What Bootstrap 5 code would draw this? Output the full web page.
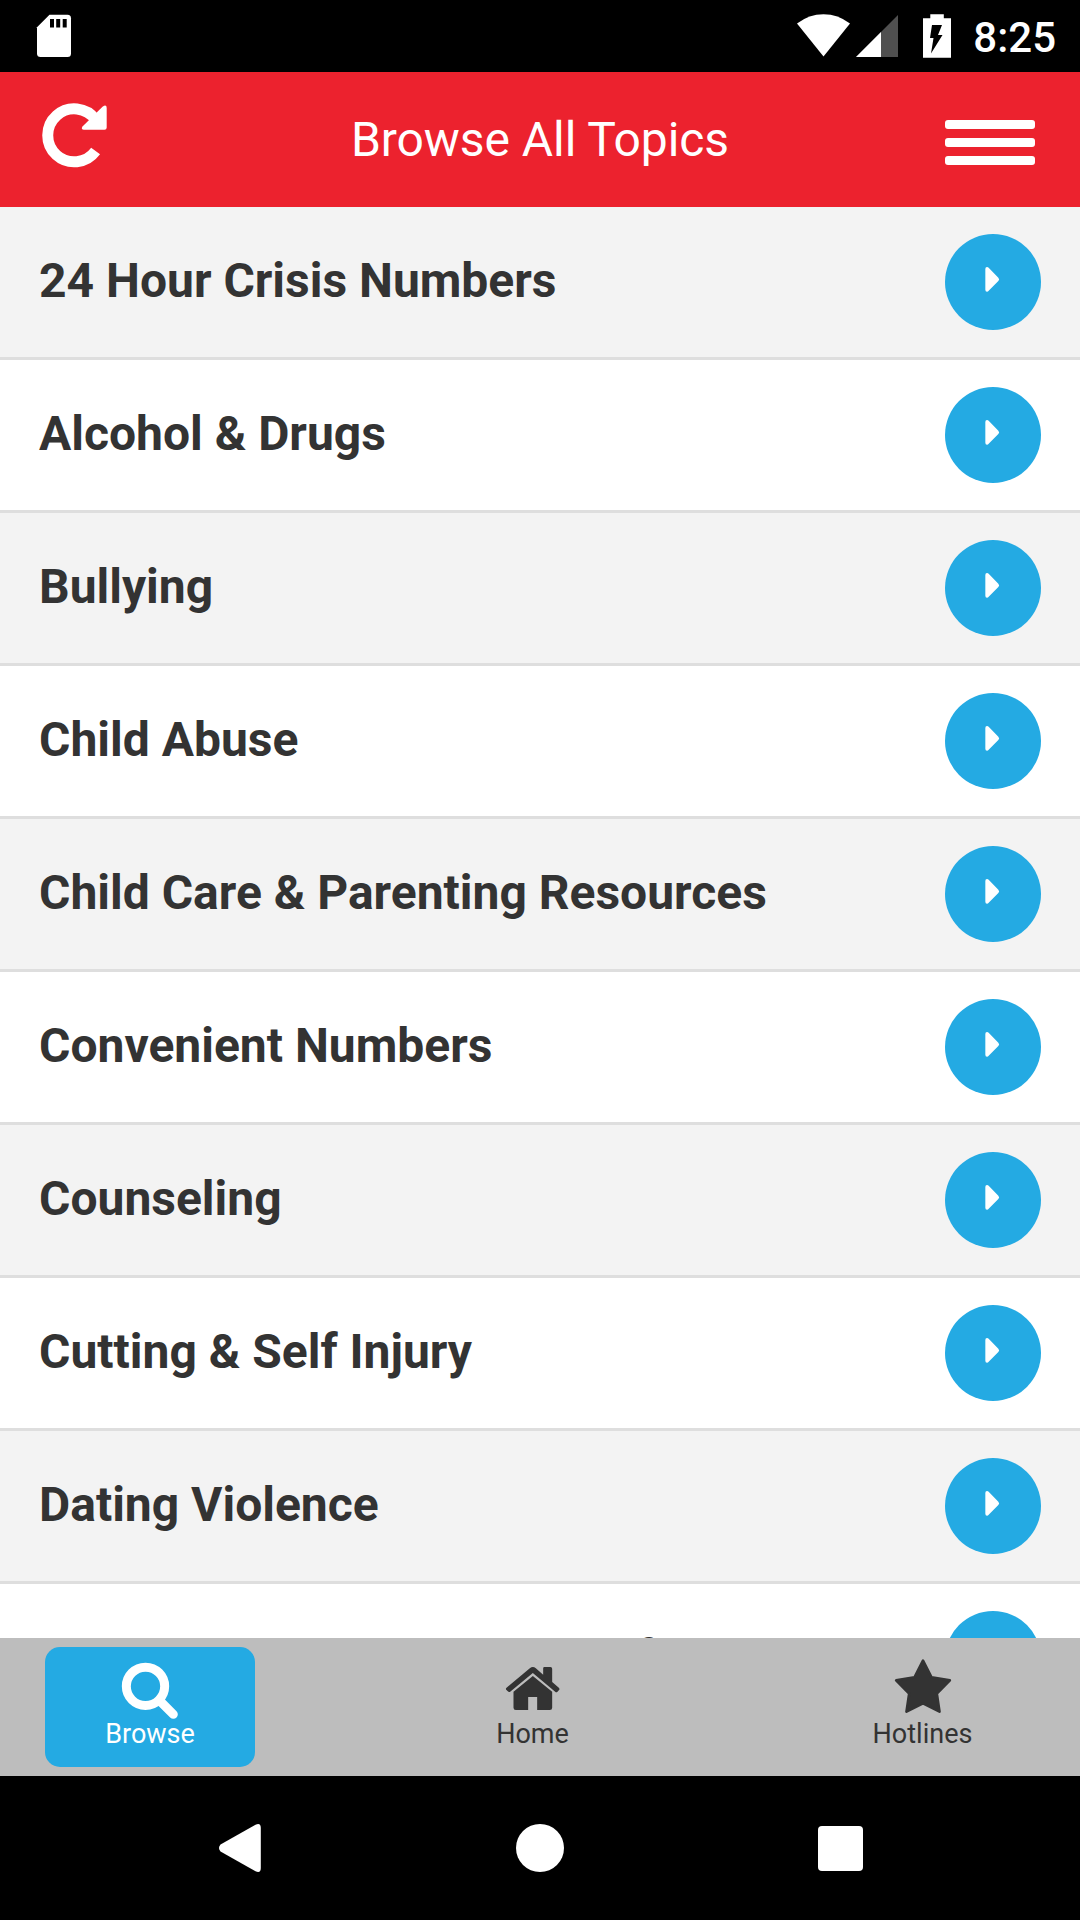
<!DOCTYPE html>
<html lang="en">
<head>
<meta charset="utf-8">
<meta name="viewport" content="width=device-width, initial-scale=1">
<title>Browse All Topics</title>
<link href="https://cdn.jsdelivr.net/npm/bootstrap@5.3.0/dist/css/bootstrap.min.css" rel="stylesheet">
<style>
  body { font-family: Roboto, "Liberation Sans", sans-serif; color: #333; }
  svg { display: block; flex: none; overflow: visible; }
  .screen { width: 1080px; height: 1920px; }
  .status-bar { height: 72px; padding: 0 24px 0 37px; }
  .signal { margin-left: 6px; }
  .battery { margin-left: 25px; }
  .clock { font-size: 42px; font-weight: 500; line-height: 50px; margin-left: 22px; padding-top: 4px; }
  .app-bar { height: 135px; padding: 0 45px; background: #ec222e; }
  .app-title { font-size: 48px; font-weight: 400; line-height: 56px; padding-top: 1px; letter-spacing: -.06px; }
  .menu-bars { width: 90px; gap: 9px; padding-top: 6px; }
  .menu-bars span { height: 9px; border-radius: 3px; background: #fff; }
  .topics { flex: 1 1 0; min-height: 0; }
  .list-group-flush > .topic, .list-group-flush > .topic:last-child { height: 153px; flex: none; padding: 0 39px; border: 0 solid #dedede; border-bottom-width: 3px; background: #fff; color: #333; }
  .list-group-flush > .topic:nth-child(odd) { background: #f3f3f3; }
  .topic-name { font-size: 48px; font-weight: 700; line-height: 56px; padding-bottom: 2px; white-space: nowrap; }
  .go { width: 96px; height: 96px; background: #24aae3; }
  .status-bar, .app-bar, .tab-bar, .sys-nav { flex: none; }
  .tab-bar { height: 138px; padding: 9px 45px; background: #bdbdbd; }
  .tab { width: 210px; height: 120px; font-size: 27px; line-height: 30px; color: #333; }
  .tab.wide { width: 225px; }
  .tab.current { background: #24aae3; color: #fff; border-radius: 15px; }
  .sys-nav { height: 144px; padding: 0 90px; }
</style>
</head>
<body>
<div class="screen d-flex flex-column overflow-hidden">
  <div class="status-bar d-flex align-items-center bg-black text-white">
    <svg class="me-auto" width="34" height="72" viewBox="37 0 34 72" fill="#fff">
      <path d="M49.5 14.8H67.5Q71 14.8 71 18.300V53.500Q71 57 67.500 57H40.500Q37 57 37 53.500V27.300Z"/>
      <path d="M50 19h4v8.500h-4zM56.200 19h4v8.500h-4zM62.700 19h4v8.500h-4z" fill="#000"/>
    </svg>
    <svg width="53" height="72" viewBox="797 0 53 72" fill="#fff"><path d="M797 23.500Q809 14.200 823.500 14.200T850 23.500L823.500 56.500Z"/></svg>
    <svg class="signal" width="42" height="72" viewBox="856 0 42 72"><path d="M898 15V57H856Z" fill="#505050"/><path d="M881 32V57H856Z" fill="#fff"/></svg>
    <svg class="battery" width="28" height="72" viewBox="923 0 28 72">
      <path d="M930.300 14.200h13.500v4H951v39.500h-28V18.200h7.300z" fill="#fff"/>
      <path d="M932 25h10l-4 10h4.500L931 53.500l2.500-15.500h-3.500z" fill="#000"/>
    </svg>
    <div class="clock">8:25</div>
  </div>

  <header class="app-bar d-flex align-items-center justify-content-between text-white">
    <svg width="90" height="135" viewBox="45 72 90 135" role="img" aria-label="Reload">
      <path d="M95.700 119.800A26.500 26.500 0 1 0 95.600 151" fill="none" stroke="#fff" stroke-width="11"/>
      <path d="M102.500 106.800Q106.700 103.500 106.700 108V127.500Q106.700 129.700 104.500 129.700H84Q80.500 129.500 82.500 126.500Z" fill="#fff"/>
    </svg>
    <h1 class="app-title m-0">Browse All Topics</h1>
    <div class="menu-bars d-flex flex-column"><span></span><span></span><span></span></div>
  </header>

  <svg width="0" height="0" class="position-absolute">
    <symbol id="arrow" viewBox="135 101 288 288"><path d="M256 206Q256 200 261 200Q264 200 266 202L295 232Q300 237 295 242L266 271Q264 274 261 274Q256 274 256 268Z" fill="#fff"/></symbol>
  </svg>
  <main class="topics list-group list-group-flush rounded-0 overflow-hidden">
    <a class="topic list-group-item d-flex align-items-center justify-content-between"><span class="topic-name">24 Hour Crisis Numbers</span><span class="go rounded-circle"><svg width="96" height="96"><use href="#arrow"/></svg></span></a>
    <a class="topic list-group-item d-flex align-items-center justify-content-between"><span class="topic-name">Alcohol &amp; Drugs</span><span class="go rounded-circle"><svg width="96" height="96"><use href="#arrow"/></svg></span></a>
    <a class="topic list-group-item d-flex align-items-center justify-content-between"><span class="topic-name">Bullying</span><span class="go rounded-circle"><svg width="96" height="96"><use href="#arrow"/></svg></span></a>
    <a class="topic list-group-item d-flex align-items-center justify-content-between"><span class="topic-name">Child Abuse</span><span class="go rounded-circle"><svg width="96" height="96"><use href="#arrow"/></svg></span></a>
    <a class="topic list-group-item d-flex align-items-center justify-content-between"><span class="topic-name">Child Care &amp; Parenting Resources</span><span class="go rounded-circle"><svg width="96" height="96"><use href="#arrow"/></svg></span></a>
    <a class="topic list-group-item d-flex align-items-center justify-content-between"><span class="topic-name">Convenient Numbers</span><span class="go rounded-circle"><svg width="96" height="96"><use href="#arrow"/></svg></span></a>
    <a class="topic list-group-item d-flex align-items-center justify-content-between"><span class="topic-name">Counseling</span><span class="go rounded-circle"><svg width="96" height="96"><use href="#arrow"/></svg></span></a>
    <a class="topic list-group-item d-flex align-items-center justify-content-between"><span class="topic-name">Cutting &amp; Self Injury</span><span class="go rounded-circle"><svg width="96" height="96"><use href="#arrow"/></svg></span></a>
    <a class="topic list-group-item d-flex align-items-center justify-content-between"><span class="topic-name">Dating Violence</span><span class="go rounded-circle"><svg width="96" height="96"><use href="#arrow"/></svg></span></a>
    <a class="topic list-group-item d-flex align-items-center justify-content-between"><span class="topic-name">Domestic Violence Centers for</span><span class="go rounded-circle"><svg width="96" height="96"><use href="#arrow"/></svg></span></a>
  </main>

  <nav class="tab-bar d-flex justify-content-between">
    <a class="tab current d-flex flex-column align-items-center text-decoration-none">
      <svg width="90" height="72" viewBox="315 261 270 216" fill="none" stroke="#fff" stroke-width="27" stroke-linecap="round"><circle cx="436.500" cy="379" r="57.500"/><path d="M480 423L520 463"/></svg>
      Browse
    </a>
    <a class="tab d-flex flex-column align-items-center text-decoration-none">
      <svg width="90" height="72" viewBox="263.500 261 270 216" fill="#333">
        <path d="M319 383L389 325Q398 317 407 325L429 344V325Q429 321 433 321H451Q456 321 456 326V366L476 383Q480 387 476 391L472 395Q469 398 465 395L398 339L330 395Q326 398 323 394L318 389Q316 386 319 383Z"/>
        <path d="M398 348L456 395V443Q456 450 449 450H411V411H384V450H347Q340 450 340 443V395Z"/>
      </svg>
      Home
    </a>
    <a class="tab wide d-flex flex-column align-items-center text-decoration-none">
      <svg width="90" height="72" viewBox="413.500 261 270 216" fill="#333" stroke="#333" stroke-width="8" stroke-linejoin="round"><path d="M548.500 302L574 352L629 361L590 401L598 455L548.500 430L499 455L507 401L468 361L523 352Z"/></svg>
      Hotlines
    </a>
  </nav>

  <div class="sys-nav d-flex align-items-center bg-black">
    <div class="col d-flex justify-content-center"><svg width="42" height="48" viewBox="0 0 42 48"><path d="M36.500 .8Q41.800 -1.500 41.800 4V44Q41.800 49.500 36.500 47.200L1.500 27.500Q-1.500 24 1.500 20.500Z" fill="#fff"/></svg></div>
    <div class="col d-flex justify-content-center"><svg width="48" height="48"><circle cx="24" cy="24" r="24" fill="#fff"/></svg></div>
    <div class="col d-flex justify-content-center"><svg width="45" height="45"><rect width="45" height="45" rx="4" fill="#fff"/></svg></div>
  </div>
</div>
<script src="https://cdn.jsdelivr.net/npm/bootstrap@5.3.0/dist/js/bootstrap.bundle.min.js"></script>
</body>
</html>
